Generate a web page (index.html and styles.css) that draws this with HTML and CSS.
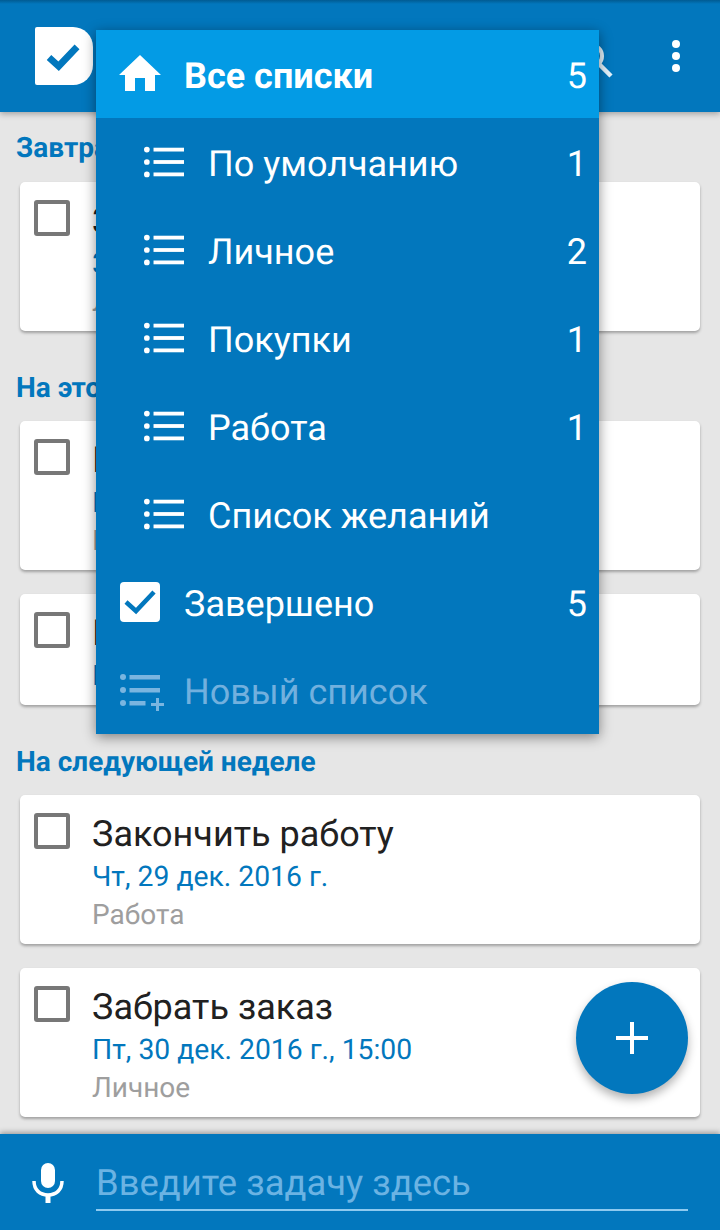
FILE: index.html
```html
<!DOCTYPE html>
<html lang="ru">
<head>
<meta charset="utf-8">
<title>Задачи</title>
<link rel="stylesheet" href="styles.css">
</head>
<body>
<div class="app">
  <header class="topbar">
    <div class="logo">
      <svg class="logo-check" viewBox="0 0 36 30"><path d="M3 16l10 9L32 5" fill="none" stroke="#0277bd" stroke-width="7"/></svg>
    </div>
    <div class="top-actions">
      <svg class="search" viewBox="0 0 40 40"><circle cx="16" cy="15" r="11" fill="none" stroke="#e3f2fb" stroke-width="4"/><path d="M24 23l12 12" stroke="#e3f2fb" stroke-width="4.500"/></svg>
      <div class="dots"><i></i><i></i><i></i></div>
    </div>
  </header>

  <main class="tasks">
    <h2 class="sec sec-first">Завтра</h2>
    <article class="card"><span class="box"></span><div class="body"><div class="t">Записаться</div><div class="d">31 дек. 2016 г.</div><div class="l">Личное</div></div></article>
    <h2 class="sec">На этой неделе</h2>
    <article class="card"><span class="box"></span><div class="body"><div class="t">Купить подарки</div><div class="d">Пт, 23 дек. 2016 г.</div><div class="l">Покупки</div></div></article>
    <article class="card card-short"><span class="box"></span><div class="body"><div class="t">Позвонить</div><div class="d">Пт, 23 дек. 2016 г.</div></div></article>
    <h2 class="sec">На следующей неделе</h2>
    <article class="card"><span class="box"></span><div class="body"><div class="t">Закончить работу</div><div class="d">Чт, 29 дек. 2016 г.</div><div class="l">Работа</div></div></article>
    <article class="card"><span class="box"></span><div class="body"><div class="t">Забрать заказ</div><div class="d">Пт, 30 дек. 2016 г., 15:00</div><div class="l">Личное</div></div></article>
  </main>

  <footer class="inputbar">
    <svg class="mic" viewBox="0 0 32 42"><rect x="9" y="1" width="14" height="25" rx="7" fill="#fff"/><path d="M2 19c0 9 6 14 14 14s14-5 14-14" fill="none" stroke="#fff" stroke-width="3.500"/><rect x="13.500" y="32" width="5" height="9" fill="#fff"/></svg>
    <div class="field">Введите задачу здесь</div>
  </footer>
</div>

<nav class="menu">
  <div class="mi mi-active">
    <svg class="ic ic-home" viewBox="0 0 42 36"><path d="M21 0L0 20h6v16h10V23h10v13h10V20h6z" fill="#fff"/></svg>
    <span class="name">Все списки</span><span class="num">5</span>
  </div>
  <div class="mi sub"><svg class="ic" viewBox="0 0 42 32"><use href="#lines"/></svg><span class="name">По умолчанию</span><span class="num">1</span></div>
  <div class="mi sub"><svg class="ic" viewBox="0 0 42 32"><use href="#lines"/></svg><span class="name">Личное</span><span class="num">2</span></div>
  <div class="mi sub"><svg class="ic" viewBox="0 0 42 32"><use href="#lines"/></svg><span class="name">Покупки</span><span class="num">1</span></div>
  <div class="mi sub"><svg class="ic" viewBox="0 0 42 32"><use href="#lines"/></svg><span class="name">Работа</span><span class="num">1</span></div>
  <div class="mi sub"><svg class="ic" viewBox="0 0 42 32"><use href="#lines"/></svg><span class="name">Список желаний</span></div>
  <div class="mi">
    <svg class="ic" viewBox="0 0 40 40"><rect width="40" height="40" rx="4" fill="#fff"/><path d="M6 20l10 9L34 10" fill="none" stroke="#0277bd" stroke-width="4.500"/></svg>
    <span class="name">Завершено</span><span class="num">5</span>
  </div>
  <div class="mi mi-new">
    <svg class="ic ic-new" viewBox="0 0 44 42"><g fill="#7ab5e0"><circle cx="3" cy="4" r="3"/><circle cx="3" cy="17" r="3"/><circle cx="3" cy="30" r="3"/><rect x="9.500" y="2" width="30.500" height="4.500"/><rect x="9.500" y="15" width="30.500" height="4.500"/><rect x="9.500" y="28" width="16" height="4.500"/><rect x="31" y="30" width="13" height="3"/><rect x="36" y="25" width="3" height="13"/></g></svg>
    <span class="name">Новый список</span>
  </div>
</nav>

<button class="fab"><svg viewBox="0 0 32 32"><path d="M0 14h32v4H0zM14 0h4v32h-4z" fill="#fff"/></svg></button>

<svg class="defs" width="0" height="0"><defs><g id="lines" fill="#fff"><circle cx="3" cy="3" r="3"/><circle cx="3" cy="16" r="3"/><circle cx="3" cy="29" r="3"/><rect x="10" y="1" width="32" height="4"/><rect x="10" y="14" width="32" height="4"/><rect x="10" y="27" width="32" height="4"/></g></defs></svg>
</body>
</html>
```

FILE: styles.css
```css
* { box-sizing: border-box; }
html, body { margin: 0; padding: 0; }
body {
  width: 720px;
  height: 1230px;
  overflow: hidden;
  position: relative;
  font-family: Roboto, sans-serif;
  text-rendering: geometricPrecision;
  background: #e6e6e6;
}
.app { display: flex; flex-direction: column; height: 1230px; }

.topbar {
  height: 112px;
  flex: none;
  background: linear-gradient(#015b92 0, #0277bd 4px);
  box-shadow: 0 2px 6px rgba(0,0,0,.3);
  display: flex;
  align-items: flex-start;
  justify-content: space-between;
  position: relative;
  z-index: 1;
  padding: 27px 0 0 35px;
}
.logo {
  width: 58px;
  height: 58px;
  background: #fff;
  border-radius: 2px 20px 20px 2px;
  display: flex;
  align-items: center;
  padding-left: 11px;
}
.logo-check { width: 35px; height: 29px; }
.top-actions { display: flex; align-items: flex-start; }
.search { width: 40px; height: 40px; margin: 14px 47px 0 0; }
.dots { display: flex; flex-direction: column; gap: 4px; width: 28px; margin: 13px 30px 0 0; align-items: center; }
.dots i { width: 8px; height: 8px; border-radius: 50%; background: #fff; display: block; }

.tasks { flex: 1; padding: 0 20px; overflow: hidden; }
.sec {
  margin: 0 0 0 -4px;
  height: 66px;
  font-size: 28px;
  line-height: 66px;
  font-weight: 700;
  color: #0277bd;
}
.sec-first { height: 70px; padding-top: 3px; }
.card {
  background: #fff;
  border-radius: 5px;
  box-shadow: 0 2px 3px rgba(0,0,0,.3);
  height: 149px;
  margin-bottom: 24px;
  display: flex;
  padding: 18px 0 0 14px;
}
.card-short { height: 111px; }
.box {
  flex: none;
  width: 36px;
  height: 36px;
  border: 4px solid #777;
  border-radius: 3px;
}
.body { margin-left: 22px; padding-top: 1px; }
.t { font-size: 36px; line-height: 40px; color: #212121; }
.d { font-size: 28.3px; line-height: 36px; color: #0277bd; margin-top: 5px; }
.l { font-size: 28px; line-height: 36px; color: #9e9e9e; margin-top: 2px; }

.inputbar {
  height: 96px;
  flex: none;
  background: #0277bd;
  box-shadow: 0 -2px 5px rgba(0,0,0,.3);
  display: flex;
  position: relative;
  padding: 0 32px 0 32px;
}
.mic { width: 32px; height: 42px; margin-top: 28px; flex: none; }
.field {
  margin-left: 32px;
  flex: 1;
  height: 77px;
  border-bottom: 2px solid #8ecaf0;
  font-size: 36.4px;
  line-height: 40px;
  padding-top: 29px;
  color: #6bb3e3;
}

.menu {
  position: absolute;
  z-index: 2;
  left: 96px;
  top: 30px;
  width: 503px;
  background: #0277bd;
  box-shadow: 0 3px 12px rgba(0,0,0,.45);
}
.mi {
  height: 88px;
  display: flex;
  align-items: center;
  padding: 0 12px 0 24px;
  color: #fff;
  font-size: 36px;
}
.mi-active { background: #039be5; font-weight: 700; }
.mi.sub { padding-left: 48px; }
.ic { width: 40px; height: 40px; flex: none; margin-right: 24px; }
.ic-home { width: 42px; height: 36px; margin: -3px 23px 0 -1px; }
.ic-new { width: 44px; height: 42px; margin: 8px 20px 0 0; }
.name { flex: 1; padding-top: 4px; }
.num { font-weight: 400; padding-top: 4px; }
.mi-new { color: #72b0de; }

.fab {
  position: absolute;
  z-index: 3;
  left: 576px;
  top: 982px;
  width: 112px;
  height: 112px;
  border: 0;
  padding: 0;
  border-radius: 50%;
  background: #0277bd;
  box-shadow: 0 5px 10px rgba(0,0,0,.3);
  display: flex;
  align-items: center;
  justify-content: center;
}
.fab svg { width: 32px; height: 32px; }
.defs { position: absolute; }
```
